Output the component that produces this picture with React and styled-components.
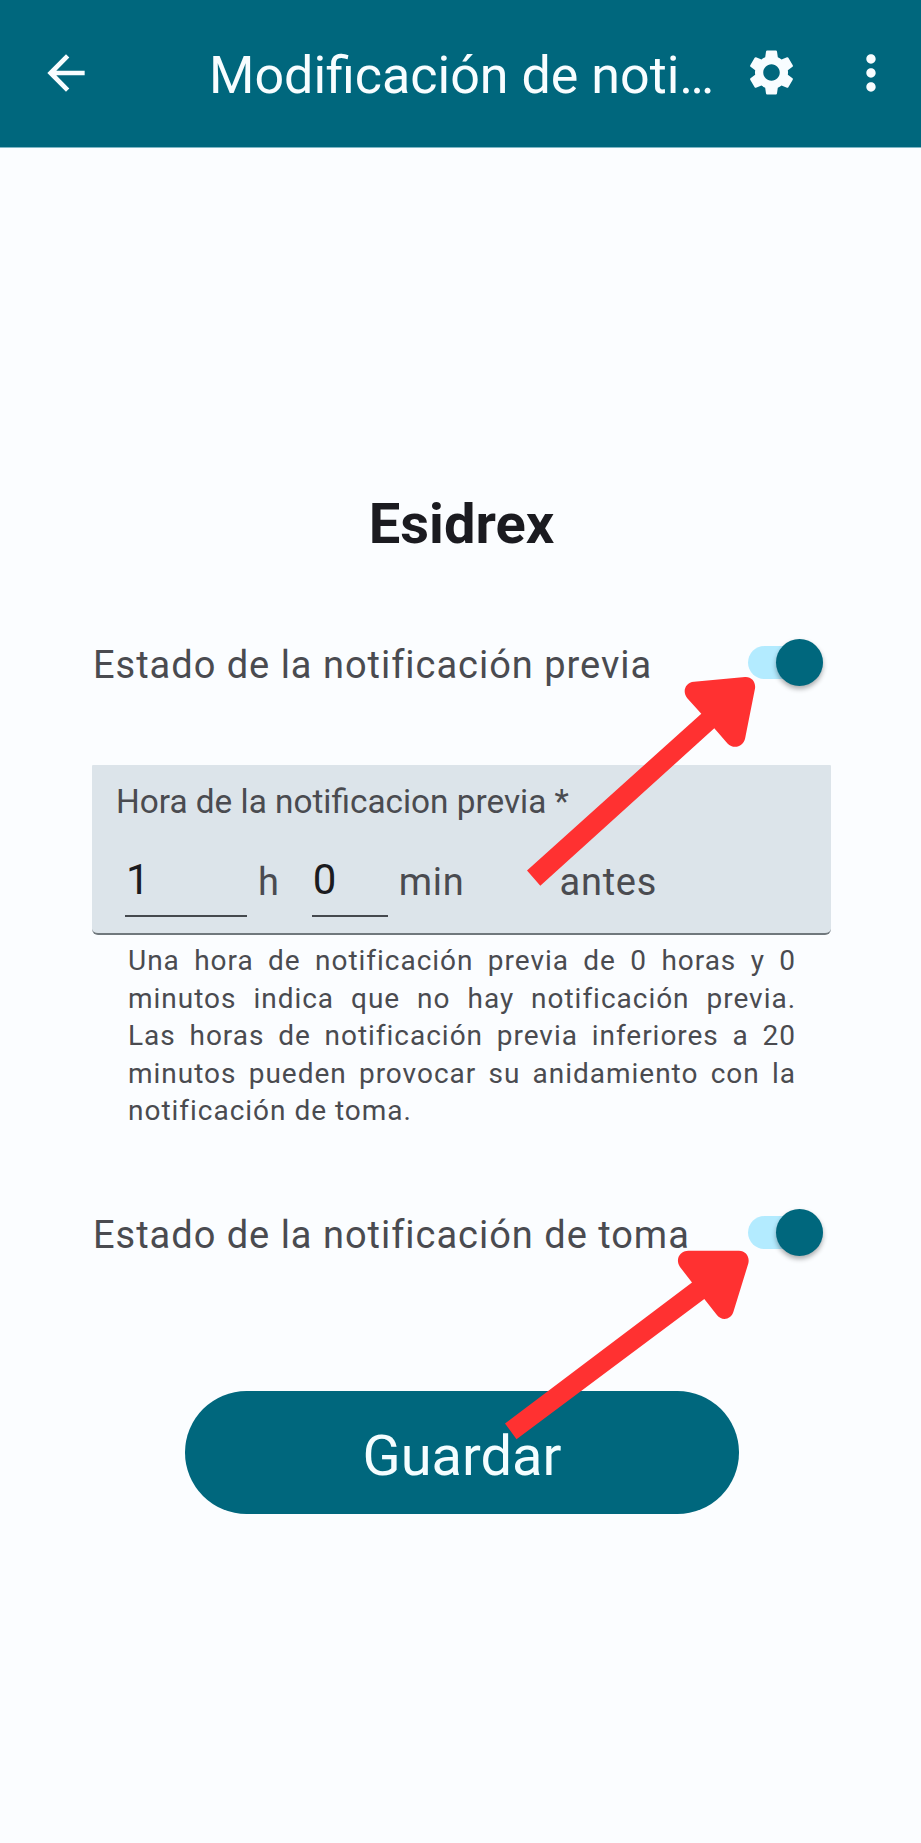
import React, { useState } from 'react';
import styled, { createGlobalStyle } from 'styled-components';
import { MdArrowBack, MdMoreVert, MdSettings } from 'react-icons/md';

const GlobalStyle = createGlobalStyle`
  *, *::before, *::after { box-sizing: border-box; }
  body { margin: 0; background: #fbfdff; }
`;

const Screen = styled.div`
  position: relative;
  width: 921px;
  height: 1843px;
  overflow: hidden;
  background: #fbfdff;
  color: #4a4b50;
  font-family: Roboto, "Liberation Sans", sans-serif;
`;

const AppBar = styled.header`
  display: flex;
  align-items: center;
  height: 148px;
  padding: 0 22px 2px 38px;
  border-bottom: 1px solid #7fb7c6;
  background: #00677d;
  color: #f8fdff;
`;

const IconButton = styled.button`
  display: flex;
  flex: none;
  justify-content: center;
  width: 56px;
  padding: 0;
  border: 0;
  background: none;
  color: inherit;
  margin-left: ${(p) => p.$gap || 0}px;
`;

const BarTitle = styled.h1`
  margin: 0 0 0 115px;
  width: 510px;
  padding-top: 6px;
  font-size: 52px;
  line-height: 66px;
  font-weight: 400;
  letter-spacing: 0;
  white-space: nowrap;
`;

const Form = styled.main`
  display: flex;
  flex-direction: column;
  padding: 341px 90px 0 92px;
`;

const MedicineName = styled.h2`
  margin: 0;
  text-align: center;
  font-size: 56px;
  line-height: 70px;
  font-weight: 700;
  color: #1b1b20;
`;

const SwitchRow = styled.label`
  display: flex;
  align-items: center;
  justify-content: space-between;
  height: 48px;
  padding: 0 8px 0 1px;
  margin-top: ${(p) => p.$top}px;
`;

const SwitchLabel = styled.span`
  padding-top: 5px;
  font-size: 38px;
  line-height: 48px;
  letter-spacing: 0.98px;
  white-space: nowrap;
`;

const Toggle = styled.button`
  display: flex;
  align-items: center;
  justify-content: ${(p) => (p.$on ? 'flex-end' : 'flex-start')};
  width: 75px;
  height: 33px;
  padding: 0;
  border: 0;
  border-radius: 17px;
  background: ${(p) => (p.$on ? '#b3ebff' : '#dbe4e9')};
`;

const Thumb = styled.span`
  flex: none;
  width: 47px;
  height: 47px;
  border-radius: 50%;
  background: #00677d;
  box-shadow: 0 3px 5px rgba(0, 0, 0, 0.32);
`;

const TimeField = styled.section`
  width: 739px;
  height: 170px;
  margin-top: 79px;
  padding: 17px 24px 0;
  border-bottom: 2px solid #70787d;
  border-radius: 1px 1px 6px 6px;
  background: #dce4ea;
`;

const FieldLabel = styled.div`
  font-size: 33.35px;
  line-height: 40px;
  white-space: nowrap;
`;

const TimeInputs = styled.div`
  display: flex;
  margin: 32px 0 0 9px;
`;

const TimeValue = styled.div`
  width: ${(p) => p.$width}px;
  height: 63px;
  padding-left: 1px;
  border-bottom: 2px solid #45494e;
  color: #1b1b20;
  font-size: 42px;
  line-height: 52px;
`;

const Unit = styled.span`
  font-size: 38px;
  line-height: 56px;
  letter-spacing: 0.75px;
  margin: 0 ${(p) => p.$after || 0}px 0 ${(p) => p.$before}px;
`;

const HelpText = styled.p`
  width: 668px;
  margin: 7px 0 0 36px;
  font-size: 28px;
  line-height: 37.6px;
  letter-spacing: 0.98px;
  text-align: justify;
`;

const SaveButton = styled.button`
  align-self: center;
  width: 554px;
  height: 123px;
  margin-top: 134px;
  padding: 7px 0 0 1px;
  border: 0;
  border-radius: 62px;
  background: #00677d;
  color: #f4fdff;
  font-family: inherit;
  font-size: 56px;
  line-height: 70px;
`;

const Pointers = styled.svg`
  position: absolute;
  inset: 0;
  pointer-events: none;
  fill: #ff3131;
`;

function Switch({ label, top }) {
  const [on, setOn] = useState(true);
  return (
    <SwitchRow $top={top}>
      <SwitchLabel>{label}</SwitchLabel>
      <Toggle type="button" role="switch" aria-checked={on} aria-label={label} $on={on} onClick={() => setOn(!on)}>
        <Thumb />
      </Toggle>
    </SwitchRow>
  );
}

export default function App() {
  return (
    <Screen>
      <GlobalStyle />
      <AppBar>
        <IconButton aria-label="Volver"><MdArrowBack size={56} /></IconButton>
        <BarTitle>Modificación de noti…</BarTitle>
        <IconButton aria-label="Ajustes" $gap={24}><MdSettings size={55} /></IconButton>
        <IconButton aria-label="Más opciones" $gap={44}><MdMoreVert size={58} /></IconButton>
      </AppBar>
      <Form>
        <MedicineName>Esidrex</MedicineName>
        <Switch label="Estado de la notificación previa" top={79} />
        <TimeField>
          <FieldLabel>Hora de la notificacion previa *</FieldLabel>
          <TimeInputs>
            <TimeValue $width={122}>1</TimeValue>
            <Unit $before={11} $after={32}>h</Unit>
            <TimeValue $width={76}>0</TimeValue>
            <Unit $before={11} $after={95}>min</Unit>
            <Unit $before={0}>antes</Unit>
          </TimeInputs>
        </TimeField>
        <HelpText>
          Una hora de notificación previa de 0 horas y 0 minutos indica que no hay notificación previa. Las&nbsp;horas de
          notificación previa inferiores a 20 minutos pueden provocar su anidamiento con la notificación de toma.
        </HelpText>
        <Switch label="Estado de la notificación de toma" top={79} />
        <SaveButton type="button">Guardar</SaveButton>
      </Form>
      <Pointers width="921" height="1843" viewBox="0 0 921 1843" aria-hidden="true">
        <path d="M527 870.5 L701.3 713.7 L687.3 698.3 C682 692 685 682.3 694 681.7 L745 677 C751.5 676.5 756 682 755 688.5 L745.2 738 C743.5 747 733.5 749.7 727.5 743.5 L714.3 728.3 L540.3 885.7 Z" />
        <path d="M505 1423.5 L692 1282.5 L680 1267 C675 1259.5 679.5 1250.8 688.5 1250.7 H739 C745.5 1250.7 750 1256.5 748.3 1263.5 L733.5 1311.5 C731 1320 721.5 1321.5 716.5 1314.5 L704.3 1299 L516.5 1439.2 Z" />
      </Pointers>
    </Screen>
  );
}
